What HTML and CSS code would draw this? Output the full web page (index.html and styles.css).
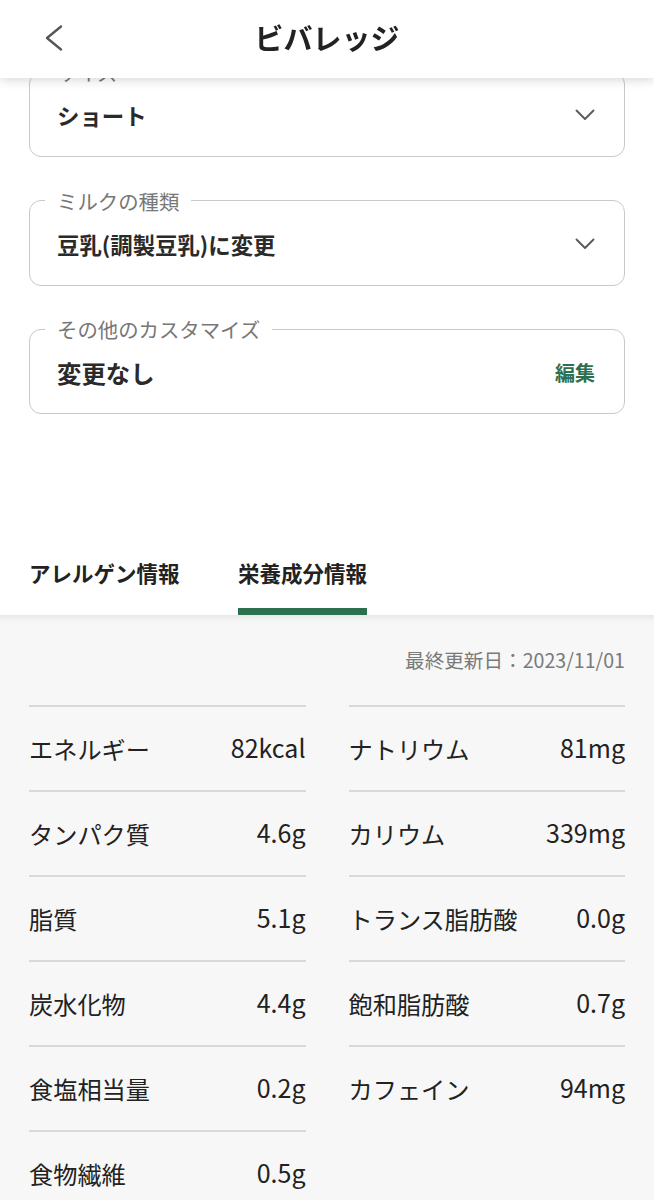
FILE: index.html
```html
<!DOCTYPE html>
<html lang="ja">
<head>
<meta charset="utf-8">
<title>ビバレッジ</title>
<link rel="stylesheet" href="styles.css">
</head>
<body>
<header class="topbar">
  <button class="back" aria-label="戻る">
    <svg width="20" height="26" viewBox="0 0 20 26"><path d="M17 1.5 L3 13 L17 24.5" fill="none" stroke="#555" stroke-width="2.3" stroke-linecap="round" stroke-linejoin="round"/></svg>
  </button>
  <h1 class="title">ビバレッジ</h1>
</header>

<main class="page">
  <section class="fields">
    <fieldset class="field">
      <legend class="field-label">サイズ</legend>
      <div class="field-body">
        <span class="field-value">ショート</span>
        <svg class="chev" width="20" height="12" viewBox="0 0 20 12"><path d="M1.5 1.5 L10 10 L18.5 1.5" fill="none" stroke="#5a5a5a" stroke-width="1.9" stroke-linecap="round" stroke-linejoin="round"/></svg>
      </div>
    </fieldset>
    <fieldset class="field">
      <legend class="field-label">ミルクの種類</legend>
      <div class="field-body">
        <span class="field-value">豆乳(調製豆乳)に変更</span>
        <svg class="chev" width="20" height="12" viewBox="0 0 20 12"><path d="M1.5 1.5 L10 10 L18.5 1.5" fill="none" stroke="#5a5a5a" stroke-width="1.9" stroke-linecap="round" stroke-linejoin="round"/></svg>
      </div>
    </fieldset>
    <fieldset class="field">
      <legend class="field-label">その他のカスタマイズ</legend>
      <div class="field-body">
        <span class="field-value big">変更なし</span>
        <span class="edit">編集</span>
      </div>
    </fieldset>
  </section>

  <nav class="tabs">
    <div class="tab">アレルゲン情報</div>
    <div class="tab active">栄養成分情報</div>
  </nav>

  <section class="nutrition">
    <p class="updated">最終更新日：2023/11/01</p>
    <div class="grid">
      <ul class="col">
        <li class="row"><span>エネルギー</span><span class="val">82kcal</span></li>
        <li class="row"><span>タンパク質</span><span class="val">4.6g</span></li>
        <li class="row"><span>脂質</span><span class="val">5.1g</span></li>
        <li class="row"><span>炭水化物</span><span class="val">4.4g</span></li>
        <li class="row"><span>食塩相当量</span><span class="val">0.2g</span></li>
        <li class="row"><span>食物繊維</span><span class="val">0.5g</span></li>
      </ul>
      <ul class="col">
        <li class="row"><span>ナトリウム</span><span class="val">81mg</span></li>
        <li class="row"><span>カリウム</span><span class="val">339mg</span></li>
        <li class="row"><span>トランス脂肪酸</span><span class="val">0.0g</span></li>
        <li class="row"><span>飽和脂肪酸</span><span class="val">0.7g</span></li>
        <li class="row"><span>カフェイン</span><span class="val">94mg</span></li>
      </ul>
    </div>
  </section>
</main>
</body>
</html>
```

FILE: styles.css
```css
* { box-sizing: border-box; }

html, body {
  margin: 0;
  padding: 0;
  background: #ffffff;
}

body {
  font-family: "Noto Sans CJK JP", "Noto Sans", sans-serif;
  color: #222;
}

.topbar {
  position: fixed;
  top: 0;
  left: 0;
  right: 0;
  height: 78px;
  background: #fff;
  box-shadow: 0 2px 10px rgba(0, 0, 0, 0.16);
  z-index: 10;
  display: flex;
  align-items: center;
  justify-content: center;
}

.back {
  position: absolute;
  left: 43px;
  top: 25px;
  width: 22px;
  height: 28px;
  padding: 0;
  border: 0;
  background: none;
}

.title {
  margin: 0;
  font-size: 29px;
  font-weight: 700;
  line-height: 36px;
  color: #222;
  margin-top: -4px;
}

.page {
  padding-top: 60px;
  height: 1200px;
  overflow: hidden;
}

.fields {
  display: flex;
  flex-direction: column;
  gap: 31.5px;
  padding: 0 29px;
}

.field {
  margin: 0;
  padding: 0;
  border: 1.6px solid #c9c9c9;
  border-radius: 12px;
  min-inline-size: 0;
}

.field-label {
  margin-left: 15px;
  padding: 0 12px;
  font-size: 20.4px;
  line-height: 24px;
  color: #777;
  font-weight: 400;
}

.field-body {
  height: 72px;
  display: flex;
  align-items: center;
  justify-content: space-between;
  padding: 0 29px 10px 27px;
}

.field-value {
  font-size: 22.4px;
  font-weight: 700;
  color: #2a2a2a;
}

.field-value.big {
  font-size: 24.4px;
}

.chev {
  display: block;
}

.edit {
  font-size: 20px;
  font-weight: 700;
  color: #2d704f;
}

.tabs {
  display: flex;
  gap: 58.5px;
  padding: 0 29px;
  margin-top: 144px;
}

.tab {
  font-size: 21.5px;
  font-weight: 700;
  line-height: 30px;
  color: #222;
  padding-bottom: 20px;
  border-bottom: 7px solid transparent;
}

.tab.active {
  border-bottom-color: #2d704f;
}

.nutrition {
  background: #f7f7f7;
  box-shadow: inset 0 10px 10px -10px rgba(0, 0, 0, 0.12);
  padding: 32px 29px 40px;
  min-height: 600px;
}

.updated {
  margin: 0;
  text-align: right;
  font-size: 19.6px;
  line-height: 26px;
  color: #7a7a7a;
}

.grid {
  margin-top: 32px;
  display: grid;
  grid-template-columns: 1fr 1fr;
  column-gap: 43px;
}

.col {
  list-style: none;
  margin: 0;
  padding: 0;
  border-bottom: 2px solid #d9d9d9;
}

.row {
  height: 85px;
  border-top: 2px solid #d9d9d9;
  display: flex;
  align-items: center;
  justify-content: space-between;
  font-size: 24.2px;
  color: #222;
}

.val {
  font-size: 25px;
  padding-bottom: 3px;
}
```
